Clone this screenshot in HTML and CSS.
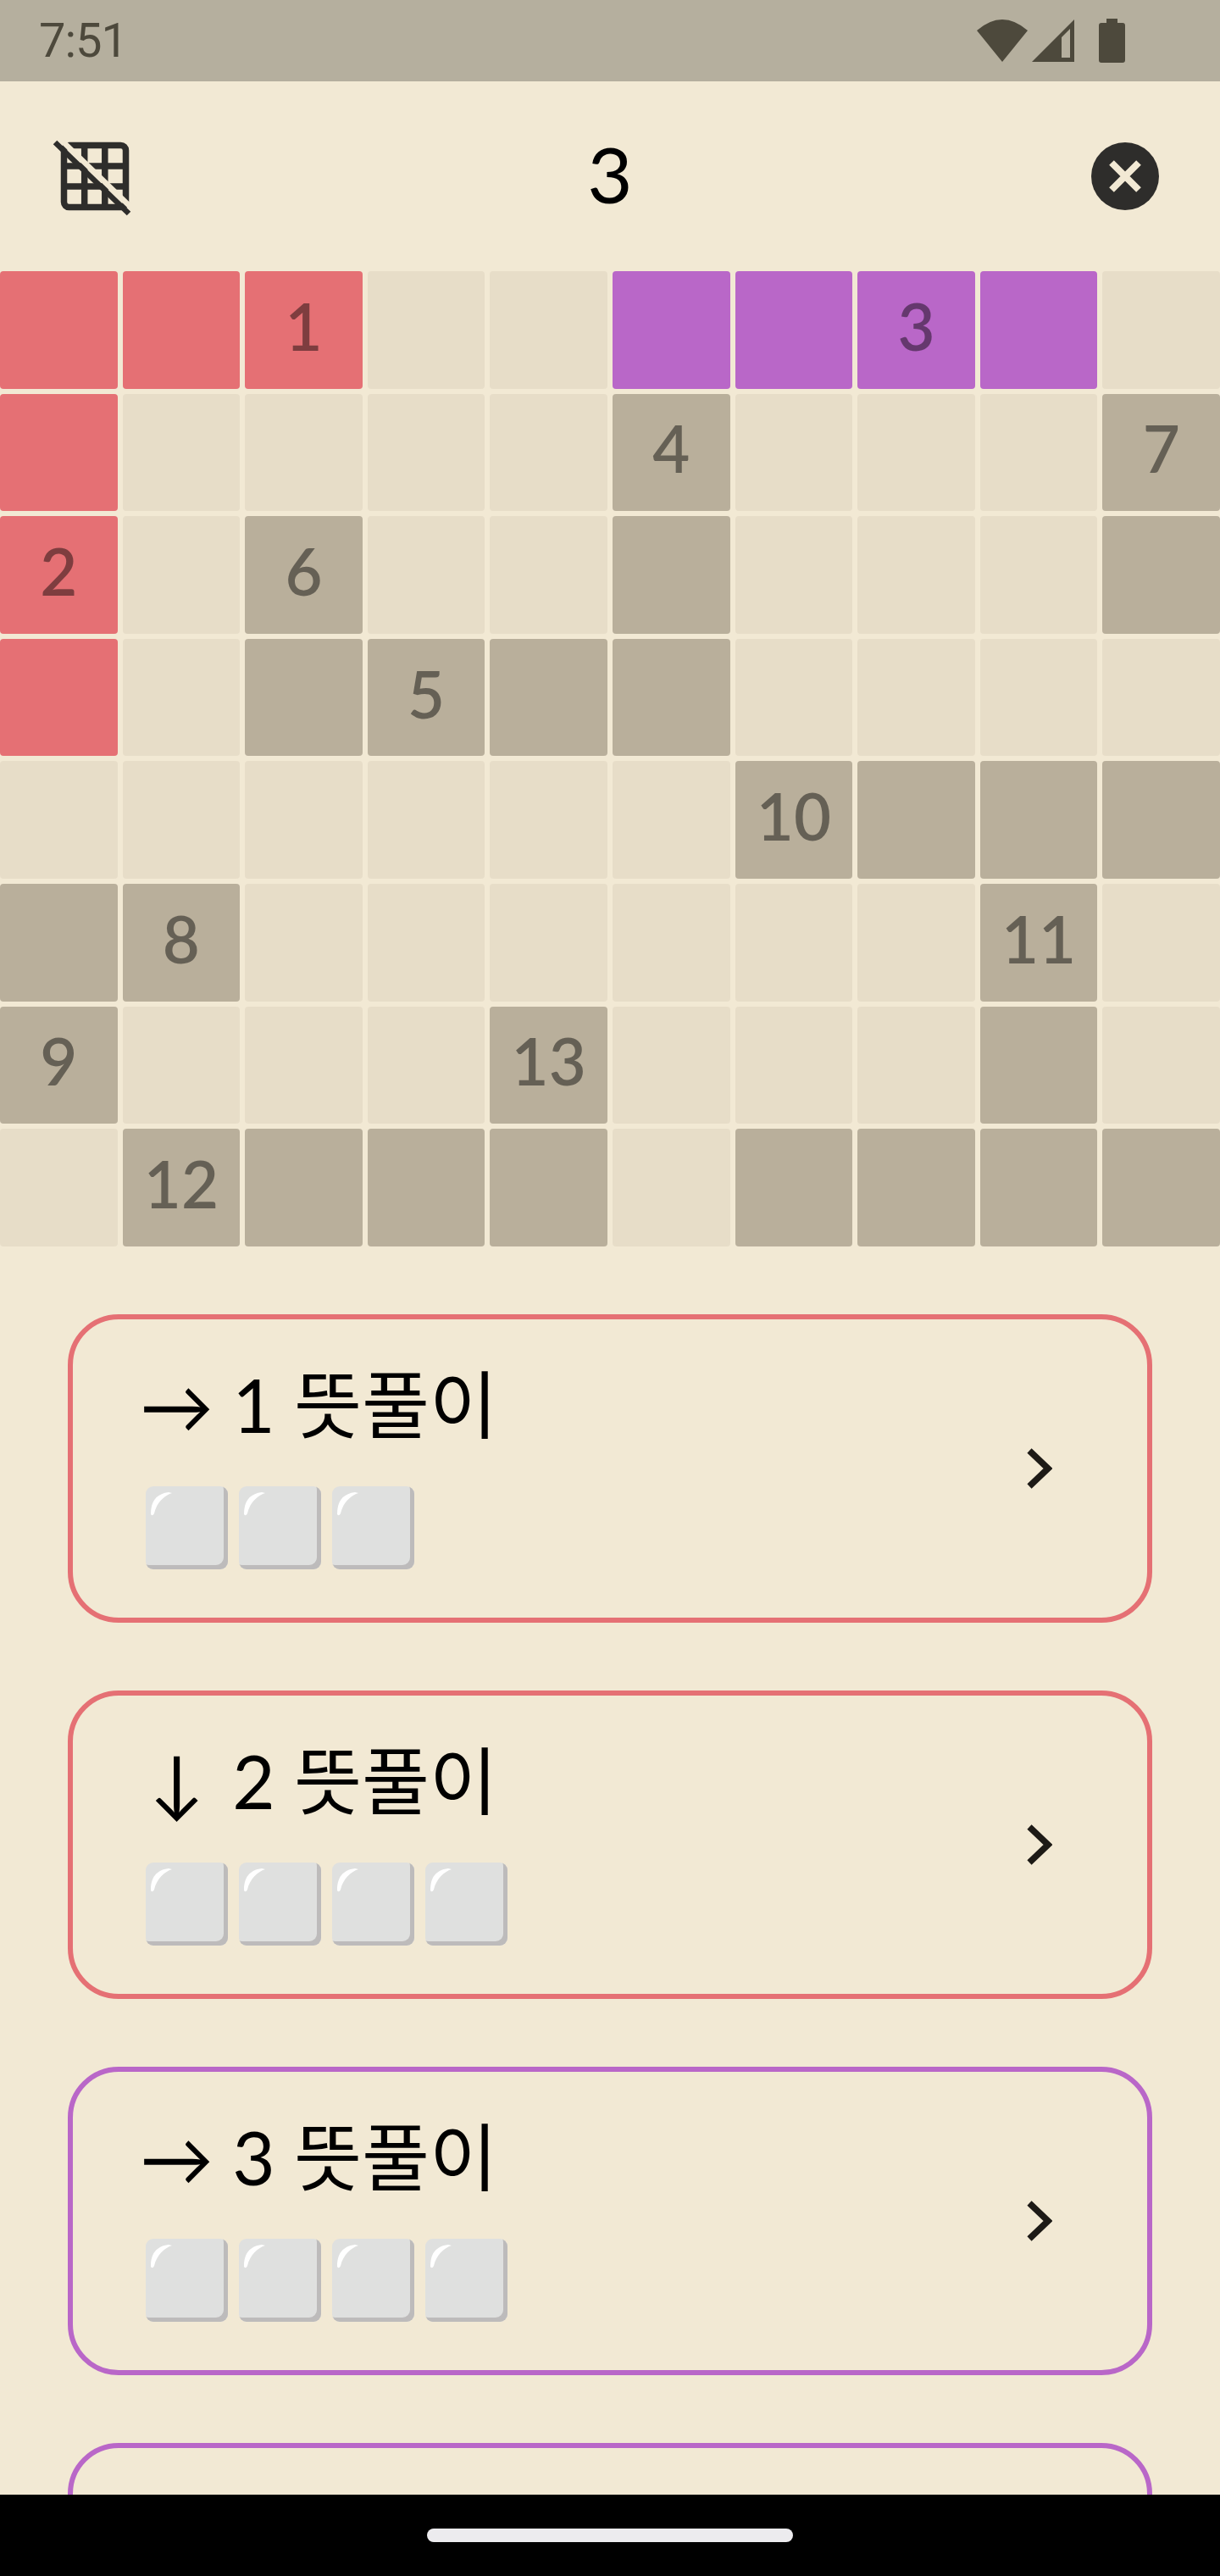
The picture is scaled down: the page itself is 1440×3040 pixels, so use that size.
FILE: index.html
```html
<!DOCTYPE html>
<html lang="ko">
  <head>
    <meta charset="utf-8">
    <title>3</title>
    <link rel="stylesheet" href="styles.css">
  </head>
  <body>
    <svg class="defs" width="0" height="0">
      <symbol id="shine" viewBox="0 0 97 98">
        <path d="M6 33 C6 18 12 9 27 7 L31 8 C22 11 13 19 10 32 Q8 36 6 33 Z" fill="#fff"/>
      </symbol>
      <symbol id="chevron" viewBox="0 0 30 48">
        <path d="M3 3 L25 24 L3 45" fill="none" stroke="#1d1a16" stroke-width="7.5"/>
      </symbol>
    </svg>

    <div class="status-bar">
      <span class="clock">7:51</span>
      <div class="status-icons">
        <svg width="60" height="50" viewBox="0 0 60 50"><path d="M0 13 Q30 -13 60 13 L30 50 Z" fill="#4d493c"/></svg>
        <svg class="signal" width="50" height="50" viewBox="0 0 50 50"><path d="M50 0 V50 H0 Z M35 21 L35 45 H45 V11 Z" fill="#4d493c" fill-rule="evenodd"/></svg>
        <svg class="battery" width="31" height="52" viewBox="0 0 31 52"><path d="M9 0 H22 V5 H28 Q31 5 31 8 V49 Q31 52 28 52 H3 Q0 52 0 49 V8 Q0 5 3 5 H9 Z" fill="#4d493c"/></svg>
      </div>
    </div>

    <main class="page">
      <header class="top-bar">
        <svg class="grid-off" width="96" height="96" viewBox="0 0 96 96">
          <rect x="15.500" y="11.500" width="73" height="73" rx="6" fill="none" stroke="#2e2d2b" stroke-width="7.500"/>
          <path d="M39.700 8 V88 M63.800 8 V88 M12 36 H92 M12 60 H92" stroke="#2e2d2b" stroke-width="7.500"/>
          <path d="M5 8 L92 92" stroke="#2e2d2b" stroke-width="6.500"/>
          <path d="M12 5 L98 88" stroke="#f2e9d4" stroke-width="6.500"/>
        </svg>
        <h1 class="title">3</h1>
        <svg class="close" width="80" height="80" viewBox="0 0 80 80">
          <circle cx="40" cy="40" r="40" fill="#2e2d2b"/>
          <path d="M24 24 L56 56 M56 24 L24 56" stroke="#f2e9d4" stroke-width="8"/>
        </svg>
      </header>

      <div class="board">
        <div class="cell red"></div><div class="cell red"></div><div class="cell red">1</div><div class="cell"></div><div class="cell"></div><div class="cell purple"></div><div class="cell purple"></div><div class="cell purple">3</div><div class="cell purple"></div><div class="cell"></div>
        <div class="cell red"></div><div class="cell"></div><div class="cell"></div><div class="cell"></div><div class="cell"></div><div class="cell used">4</div><div class="cell"></div><div class="cell"></div><div class="cell"></div><div class="cell used">7</div>
        <div class="cell red">2</div><div class="cell"></div><div class="cell used">6</div><div class="cell"></div><div class="cell"></div><div class="cell used"></div><div class="cell"></div><div class="cell"></div><div class="cell"></div><div class="cell used"></div>
        <div class="cell red"></div><div class="cell"></div><div class="cell used"></div><div class="cell used">5</div><div class="cell used"></div><div class="cell used"></div><div class="cell"></div><div class="cell"></div><div class="cell"></div><div class="cell"></div>
        <div class="cell"></div><div class="cell"></div><div class="cell"></div><div class="cell"></div><div class="cell"></div><div class="cell"></div><div class="cell used">10</div><div class="cell used"></div><div class="cell used"></div><div class="cell used"></div>
        <div class="cell used"></div><div class="cell used">8</div><div class="cell"></div><div class="cell"></div><div class="cell"></div><div class="cell"></div><div class="cell"></div><div class="cell"></div><div class="cell used">11</div><div class="cell"></div>
        <div class="cell used">9</div><div class="cell"></div><div class="cell"></div><div class="cell"></div><div class="cell used">13</div><div class="cell"></div><div class="cell"></div><div class="cell"></div><div class="cell used"></div><div class="cell"></div>
        <div class="cell"></div><div class="cell used">12</div><div class="cell used"></div><div class="cell used"></div><div class="cell used"></div><div class="cell"></div><div class="cell used"></div><div class="cell used"></div><div class="cell used"></div><div class="cell used"></div>
      </div>

      <section class="clues">
        <div class="clue red-line">
          <div class="clue-body">
            <div class="clue-title">→ 1 뜻풀이</div>
            <div class="boxes">
              <span class="box"><svg><use href="#shine"/></svg></span>
              <span class="box"><svg><use href="#shine"/></svg></span>
              <span class="box"><svg><use href="#shine"/></svg></span>
            </div>
          </div>
          <svg class="chevron" width="30" height="48"><use href="#chevron"/></svg>
        </div>

        <div class="clue red-line">
          <div class="clue-body">
            <div class="clue-title"><span class="down">↓</span> 2 뜻풀이</div>
            <div class="boxes">
              <span class="box"><svg><use href="#shine"/></svg></span>
              <span class="box"><svg><use href="#shine"/></svg></span>
              <span class="box"><svg><use href="#shine"/></svg></span>
              <span class="box"><svg><use href="#shine"/></svg></span>
            </div>
          </div>
          <svg class="chevron" width="30" height="48"><use href="#chevron"/></svg>
        </div>

        <div class="clue purple-line">
          <div class="clue-body">
            <div class="clue-title">→ 3 뜻풀이</div>
            <div class="boxes">
              <span class="box"><svg><use href="#shine"/></svg></span>
              <span class="box"><svg><use href="#shine"/></svg></span>
              <span class="box"><svg><use href="#shine"/></svg></span>
              <span class="box"><svg><use href="#shine"/></svg></span>
            </div>
          </div>
          <svg class="chevron" width="30" height="48"><use href="#chevron"/></svg>
        </div>

        <div class="clue purple-line"></div>
      </section>
    </main>

    <div class="nav-bar">
      <div class="home-pill"></div>
    </div>
  </body>
</html>
```

FILE: styles.css
```css
* {
  box-sizing: border-box;
}

html,
body {
  margin: 0;
  padding: 0;
}

body {
  width: 1440px;
  height: 3040px;
  display: flex;
  flex-direction: column;
  overflow: hidden;
  background-color: #f2e9d4;
  font-family: Lato, "Noto Sans CJK KR", sans-serif;
}

.defs {
  display: none;
}

.status-bar {
  height: 96px;
  flex-shrink: 0;
  display: flex;
  align-items: center;
  justify-content: space-between;
  padding: 0 112px 0 46px;
  background-color: #b5af9e;
}

.clock {
  font-family: Roboto, sans-serif;
  font-size: 56px;
  color: #4d493c;
  letter-spacing: -1px;
}

.status-icons {
  display: flex;
  align-items: center;
}

.signal {
  margin-left: 5px;
}

.battery {
  margin-left: 29px;
}

.page {
  flex: 1;
  min-height: 0;
  overflow: hidden;
}

.top-bar {
  height: 224px;
  display: flex;
  align-items: center;
  justify-content: space-between;
  padding: 0 72px 0 60px;
  position: relative;
}

.title {
  margin: 0 0 8px;
  font-size: 92px;
  font-weight: 400;
  color: #000;
  position: absolute;
  left: 0;
  right: 0;
  text-align: center;
}

.board {
  display: grid;
  grid-template-columns: repeat(10, 1fr);
  gap: 6px;
}

.cell {
  height: 138.600px;
  display: flex;
  align-items: center;
  justify-content: center;
  padding-bottom: 10px;
  border-radius: 4px;
  background-color: #e7ddc8;
  font-size: 76px;
  font-weight: 600;
  color: rgba(0, 0, 0, 0.45);
}

.cell.used {
  background-color: #b9af9b;
}

.cell.red {
  background-color: #e57074;
}

.cell.purple {
  background-color: #b967c8;
}

.clues {
  padding: 80px 80px 0;
  display: flex;
  flex-direction: column;
  gap: 80px;
}

.clue {
  height: 364px;
  flex-shrink: 0;
  display: flex;
  align-items: center;
  justify-content: space-between;
  padding: 0 112px 0 79px;
  border: 6px solid;
  border-radius: 60px;
}

.clue-body {
  padding-bottom: 11px;
}

.red-line {
  border-color: #e57074;
}

.purple-line {
  border-color: #b967c8;
}

.clue-title {
  font-size: 87px;
  line-height: 110px;
  color: #000;
}

.down {
  display: inline-block;
  width: 87px;
  text-align: center;
}

.boxes {
  display: flex;
  gap: 13px;
  margin-top: 41px;
  padding-left: 7px;
}

.box {
  width: 97px;
  height: 98px;
  border-radius: 9px;
  background-color: #dfe0df;
  box-shadow: inset -5px -5px 0 #bdbbbb;
}

.box svg {
  display: block;
  width: 97px;
  height: 98px;
}

.nav-bar {
  height: 96px;
  flex-shrink: 0;
  display: flex;
  justify-content: center;
  padding-top: 40px;
  background-color: #000;
}

.home-pill {
  width: 432px;
  height: 16px;
  border-radius: 8px;
  background-color: #ecebee;
}
```
